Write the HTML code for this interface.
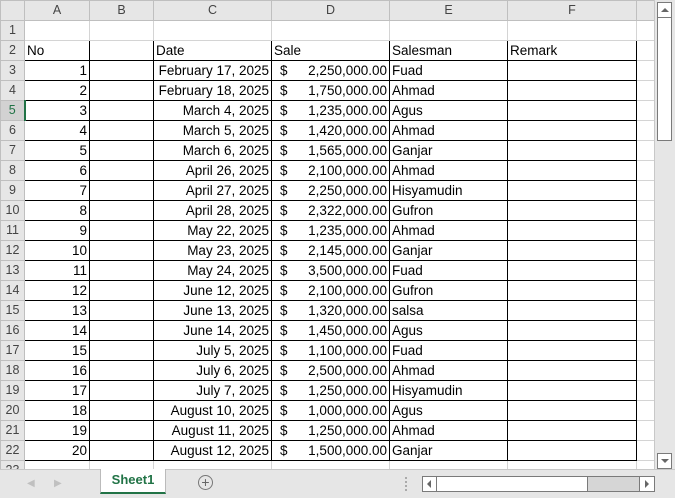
<!DOCTYPE html>
<html><head><style>
body{margin:0;width:675px;height:497px;overflow:hidden;background:#fff;font-family:"Liberation Sans",sans-serif;position:relative}
table{position:absolute;left:0;top:0;border-collapse:collapse;table-layout:fixed}
td{border:1px solid #d4d4d4;height:19px;padding:0 2px;font-size:13.5px;white-space:nowrap;overflow:hidden;color:#000;line-height:19px;box-sizing:border-box}
tr.h td{background:#e6e6e6;color:#444;text-align:center;font-size:12.5px;border-color:#bfbfbf}
td.rh{background:#e6e6e6;color:#444;text-align:center;font-size:12.5px;border-color:#bfbfbf;padding:0}
td.b{border:1px solid #000}
td.r{text-align:right}
td.d span{float:left;padding-left:6px}
.sb{position:absolute;background:#e6e6e6}
</style></head><body>
<table>
<colgroup><col style="width:24px"><col style="width:65px"><col style="width:64px"><col style="width:118px"><col style="width:118px"><col style="width:118px"><col style="width:129px"><col style="width:18px"></colgroup>
<tr class="h"><td style="background:#e6e6e6"></td><td>A</td><td>B</td><td>C</td><td>D</td><td>E</td><td>F</td><td></td></tr>
<tr><td class="rh">1</td><td></td><td></td><td></td><td></td><td></td><td></td><td></td></tr>
<tr><td class="rh">2</td><td class="b">No</td><td class="b"></td><td class="b">Date</td><td class="b">Sale</td><td class="b">Salesman</td><td class="b">Remark</td><td></td></tr>
<tr><td class="rh">3</td><td class="b r">1</td><td class="b"></td><td class="b r">February 17, 2025</td><td class="b r d"><span>$</span>2,250,000.00</td><td class="b">Fuad</td><td class="b"></td><td></td></tr>
<tr><td class="rh">4</td><td class="b r">2</td><td class="b"></td><td class="b r">February 18, 2025</td><td class="b r d"><span>$</span>1,750,000.00</td><td class="b">Ahmad</td><td class="b"></td><td></td></tr>
<tr><td class="rh" style="color:#217346;background:#d2d2d2">5</td><td class="b r" style="border-left:2px solid #217346">3</td><td class="b"></td><td class="b r">March 4, 2025</td><td class="b r d"><span>$</span>1,235,000.00</td><td class="b">Agus</td><td class="b"></td><td></td></tr>
<tr><td class="rh">6</td><td class="b r">4</td><td class="b"></td><td class="b r">March 5, 2025</td><td class="b r d"><span>$</span>1,420,000.00</td><td class="b">Ahmad</td><td class="b"></td><td></td></tr>
<tr><td class="rh">7</td><td class="b r">5</td><td class="b"></td><td class="b r">March 6, 2025</td><td class="b r d"><span>$</span>1,565,000.00</td><td class="b">Ganjar</td><td class="b"></td><td></td></tr>
<tr><td class="rh">8</td><td class="b r">6</td><td class="b"></td><td class="b r">April 26, 2025</td><td class="b r d"><span>$</span>2,100,000.00</td><td class="b">Ahmad</td><td class="b"></td><td></td></tr>
<tr><td class="rh">9</td><td class="b r">7</td><td class="b"></td><td class="b r">April 27, 2025</td><td class="b r d"><span>$</span>2,250,000.00</td><td class="b">Hisyamudin</td><td class="b"></td><td></td></tr>
<tr><td class="rh">10</td><td class="b r">8</td><td class="b"></td><td class="b r">April 28, 2025</td><td class="b r d"><span>$</span>2,322,000.00</td><td class="b">Gufron</td><td class="b"></td><td></td></tr>
<tr><td class="rh">11</td><td class="b r">9</td><td class="b"></td><td class="b r">May 22, 2025</td><td class="b r d"><span>$</span>1,235,000.00</td><td class="b">Ahmad</td><td class="b"></td><td></td></tr>
<tr><td class="rh">12</td><td class="b r">10</td><td class="b"></td><td class="b r">May 23, 2025</td><td class="b r d"><span>$</span>2,145,000.00</td><td class="b">Ganjar</td><td class="b"></td><td></td></tr>
<tr><td class="rh">13</td><td class="b r">11</td><td class="b"></td><td class="b r">May 24, 2025</td><td class="b r d"><span>$</span>3,500,000.00</td><td class="b">Fuad</td><td class="b"></td><td></td></tr>
<tr><td class="rh">14</td><td class="b r">12</td><td class="b"></td><td class="b r">June 12, 2025</td><td class="b r d"><span>$</span>2,100,000.00</td><td class="b">Gufron</td><td class="b"></td><td></td></tr>
<tr><td class="rh">15</td><td class="b r">13</td><td class="b"></td><td class="b r">June 13, 2025</td><td class="b r d"><span>$</span>1,320,000.00</td><td class="b">salsa</td><td class="b"></td><td></td></tr>
<tr><td class="rh">16</td><td class="b r">14</td><td class="b"></td><td class="b r">June 14, 2025</td><td class="b r d"><span>$</span>1,450,000.00</td><td class="b">Agus</td><td class="b"></td><td></td></tr>
<tr><td class="rh">17</td><td class="b r">15</td><td class="b"></td><td class="b r">July 5, 2025</td><td class="b r d"><span>$</span>1,100,000.00</td><td class="b">Fuad</td><td class="b"></td><td></td></tr>
<tr><td class="rh">18</td><td class="b r">16</td><td class="b"></td><td class="b r">July 6, 2025</td><td class="b r d"><span>$</span>2,500,000.00</td><td class="b">Ahmad</td><td class="b"></td><td></td></tr>
<tr><td class="rh">19</td><td class="b r">17</td><td class="b"></td><td class="b r">July 7, 2025</td><td class="b r d"><span>$</span>1,250,000.00</td><td class="b">Hisyamudin</td><td class="b"></td><td></td></tr>
<tr><td class="rh">20</td><td class="b r">18</td><td class="b"></td><td class="b r">August 10, 2025</td><td class="b r d"><span>$</span>1,000,000.00</td><td class="b">Agus</td><td class="b"></td><td></td></tr>
<tr><td class="rh">21</td><td class="b r">19</td><td class="b"></td><td class="b r">August 11, 2025</td><td class="b r d"><span>$</span>1,250,000.00</td><td class="b">Ahmad</td><td class="b"></td><td></td></tr>
<tr><td class="rh">22</td><td class="b r">20</td><td class="b"></td><td class="b r">August 12, 2025</td><td class="b r d"><span>$</span>1,500,000.00</td><td class="b">Ganjar</td><td class="b"></td><td></td></tr>
<tr><td class="rh">23</td><td></td><td></td><td></td><td></td><td></td><td></td><td></td></tr>
</table>
<!-- vertical scrollbar -->
<div class="sb" style="left:654px;top:0;width:21px;height:470px;border-left:1px solid #c8c8c8"></div>
<div style="position:absolute;left:657px;top:2px;width:13px;height:14px;border:1px solid #7a7a7a;background:#fff"><div style="margin:5px auto 0;width:0;height:0;border-left:4px solid transparent;border-right:4px solid transparent;border-bottom:4px solid #666"></div></div>
<div style="position:absolute;left:657px;top:17px;width:13px;height:122px;border:1px solid #7a7a7a;background:#fff"></div>
<div style="position:absolute;left:657px;top:453px;width:13px;height:14px;border:1px solid #7a7a7a;background:#fff"><div style="margin:5px auto 0;width:0;height:0;border-left:4px solid transparent;border-right:4px solid transparent;border-top:4px solid #666"></div></div>
<!-- bottom bar -->
<div class="sb" style="left:0;top:469px;width:675px;height:28px;border-top:1px solid #c8c8c8"></div>
<div style="position:absolute;left:27px;top:478px;color:#c0c0c0;font-size:10px">◀</div>
<div style="position:absolute;left:54px;top:478px;color:#c0c0c0;font-size:10px">▶</div>
<div style="position:absolute;left:100px;top:469px;width:64px;height:23px;background:#fff;border-left:1px solid #bbb;border-right:1px solid #bbb;border-bottom:2px solid #217346;color:#217346;font-weight:bold;font-size:13px;text-align:center;line-height:22px">Sheet1</div>
<div style="position:absolute;left:198px;top:475px;width:13px;height:13px;border:1px solid #777;border-radius:50%;color:#666;font-size:14px;line-height:13px;text-align:center">+</div>
<div style="position:absolute;left:405px;top:477px;width:2px;height:14px;border-left:2px dotted #aaa"></div>
<div style="position:absolute;left:422px;top:476px;width:231px;height:14px;border:1px solid #7a7a7a;background:#d6d6d6"></div>
<div style="position:absolute;left:423px;top:477px;width:13px;height:14px;border-right:1px solid #7a7a7a;background:#fff"><div style="margin:3px 0 0 4px;width:0;height:0;border-top:4px solid transparent;border-bottom:4px solid transparent;border-right:4px solid #666"></div></div>
<div style="position:absolute;left:437px;top:477px;width:150px;height:14px;border-right:1px solid #7a7a7a;background:#fff"></div>
<div style="position:absolute;left:639px;top:477px;width:14px;height:14px;border-left:1px solid #7a7a7a;background:#fff"><div style="margin:3px 0 0 5px;width:0;height:0;border-top:4px solid transparent;border-bottom:4px solid transparent;border-left:4px solid #666"></div></div>
</body></html>
